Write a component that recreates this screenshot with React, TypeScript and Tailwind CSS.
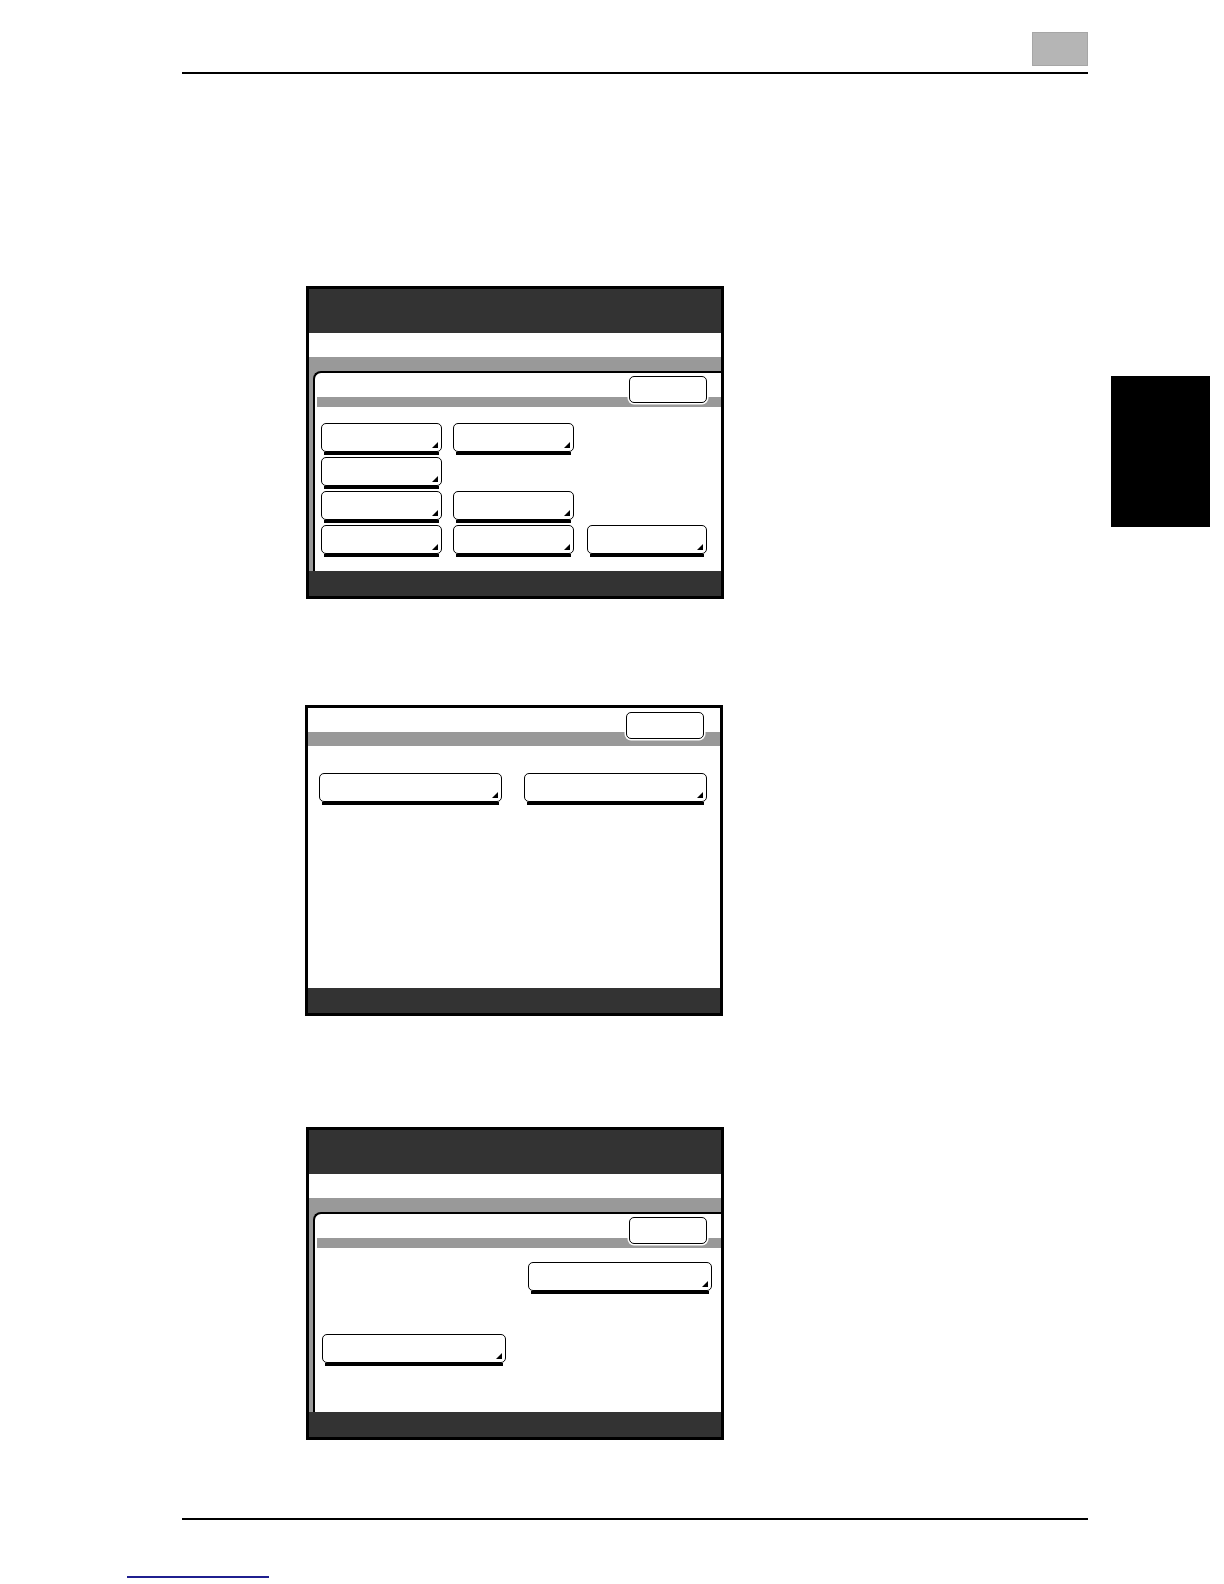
import React from "react";

function Tri() {
  return (
    <svg className="absolute right-[3px] bottom-[3px]" width="6" height="6" viewBox="0 0 6 6">
      <polygon points="6,0 6,6 0,6" fill="#000" />
    </svg>
  );
}

function Key({ className }: { className: string }) {
  return (
    <div className={"flex flex-col " + className}>
      <div className="relative h-[29px] rounded-[5px] border-[1.5px] border-black bg-white">
        <Tri />
      </div>
      <div className="mx-[3px] h-[3px] bg-black" />
    </div>
  );
}

function SmallKey() {
  return (
    <div className="h-[27px] w-[78px] rounded-[5px] border-[1.5px] border-black bg-white ring-[1.5px] ring-white" />
  );
}

function InnerHead() {
  return (
    <div className="relative h-[34px]">
      <div className="absolute left-0 right-0 top-0 mt-[24px] ml-[2px] h-[10px] bg-[#999999]" />
      <div className="absolute right-[14px] top-[3px]">
        <SmallKey />
      </div>
    </div>
  );
}

function ScreenShell({ children }: { children: React.ReactNode }) {
  return (
    <div className="flex h-[313px] w-[418px] flex-col border-[3px] border-black bg-white">
      <div className="h-[44px] bg-[#333333]" />
      <div className="h-[24px] bg-white" />
      <div className="flex flex-1 flex-col bg-[#999999] pt-[14px] pl-[4px]">
        <div className="flex flex-1 flex-col rounded-tl-[8px] border-t-2 border-l-2 border-black bg-white">
          {children}
        </div>
      </div>
      <div className="h-[25px] bg-[#333333]" />
    </div>
  );
}

export default function App() {
  return (
    <div className="relative h-[1584px] w-[1224px] bg-white" style={{ fontFamily: '"Liberation Sans", Arial, sans-serif' }}>
      {/* header */}
      <div className="ml-[182px] flex w-[906px] justify-end border-b-2 border-black pt-[32px] pb-[6px]">
        <div className="h-[34px] w-[56px] border border-[#a6a6a6] bg-[#b5b5b5]" />
      </div>

      <div className="flex">
        <div className="ml-[306px] flex flex-col">
          {/* panel 1 */}
          <div className="mt-[212px]">
            <ScreenShell>
              <InnerHead />
              <div className="mt-[16px] ml-[6px] flex flex-col gap-[2px]">
                <div className="flex">
                  <Key className="w-[121px]" />
                  <Key className="ml-[11px] w-[121px]" />
                </div>
                <div className="flex">
                  <Key className="w-[121px]" />
                </div>
                <div className="flex">
                  <Key className="w-[121px]" />
                  <Key className="ml-[11px] w-[121px]" />
                </div>
                <div className="flex">
                  <Key className="w-[121px]" />
                  <Key className="ml-[11px] w-[121px]" />
                  <Key className="ml-[13px] w-[120px]" />
                </div>
              </div>
            </ScreenShell>
          </div>

          {/* panel 2 */}
          <div className="mt-[106px] ml-[-1px] flex h-[311px] w-[418px] flex-col border-[3px] border-black bg-white">
            <div className="relative h-[38px]">
              <div className="absolute left-0 right-0 top-[24px] h-[14px] bg-[#999999]" />
              <div className="absolute right-[16px] top-[4px]">
                <SmallKey />
              </div>
            </div>
            <div className="mt-[27px] ml-[11px] flex">
              <Key className="w-[183px]" />
              <Key className="ml-[22px] w-[183px]" />
            </div>
            <div className="flex-1" />
            <div className="h-[25px] bg-[#333333]" />
          </div>

          {/* panel 3 */}
          <div className="mt-[111px]">
            <ScreenShell>
              <InnerHead />
              <div className="mt-[14px] flex justify-end pr-[9px]">
                <Key className="w-[184px]" />
              </div>
              <div className="mt-[40px] ml-[7px] flex">
                <Key className="w-[184px]" />
              </div>
            </ScreenShell>
          </div>
        </div>

        {/* side tab */}
        <div className="mt-[302px] ml-[387px] h-[151px] w-[99px] self-start bg-black" />
      </div>

      <div className="mt-[78px] ml-[182px] h-[2px] w-[906px] bg-black" />
      <div className="mt-[56px] ml-[127px] h-[2px] w-[142px] bg-[#1f1f8f]" />
    </div>
  );
}
